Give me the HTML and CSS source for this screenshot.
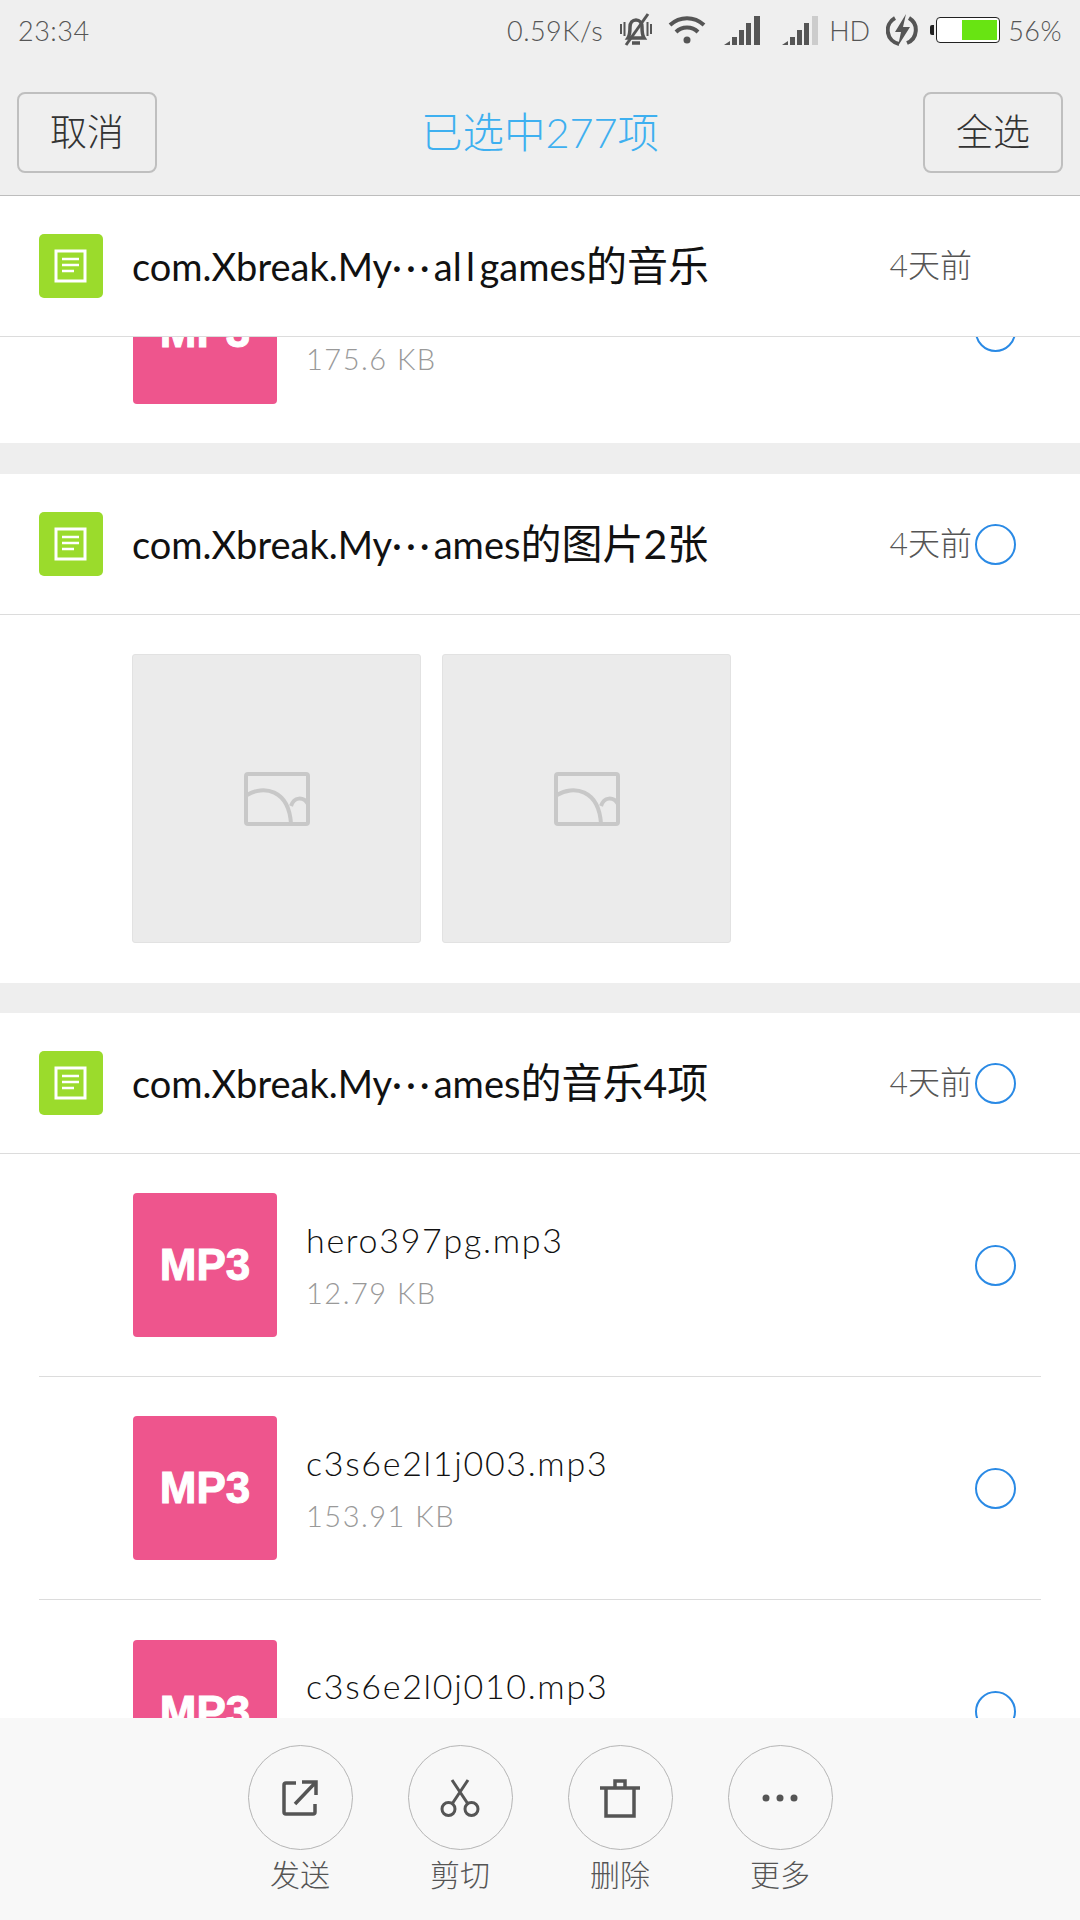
FILE: index.html
```html
<!DOCTYPE html>
<html lang="zh-CN">
<head>
    <meta charset="UTF-8">
    <meta name="viewport" content="width=device-width, initial-scale=1.0">
    <title>已选中277项</title>
    <link rel="stylesheet" href="styles.css">
</head>
<body>
    <div class="top">
        <!-- status bar -->
        <div class="status">
            <span class="clock">23:34</span>
            <span class="speed">0.59K/s</span>
            <svg class="st-mute" width="36" height="36" viewBox="0 0 36 36" fill="none" stroke="#555">
                <path d="M10 26c2-3 2-7 2-11 0-4 2.500-7 6-7s6 3 6 7c0 4 0 8 2 11z" stroke-width="3.500"/>
                <path d="M14 31h8" stroke-width="3.500"/>
                <path d="M3 12v10M6.500 10v14M33 12v10M29.500 10v14" stroke-width="2"/>
                <path d="M30 2L8 33" stroke-width="3"/>
            </svg>
            <svg class="st-wifi" width="38" height="30" viewBox="0 0 38 30" fill="none" stroke="#555" stroke-width="4">
                <path d="M2 10c10-9 24-9 34 0"/>
                <path d="M8 17c6-6 16-6 22 0"/>
                <circle cx="19" cy="25" r="3.500" fill="#555" stroke="none"/>
            </svg>
            <svg class="st-sig" width="38" height="30" viewBox="0 0 38 30" fill="#555">
                <path d="M0 30l6-4v4zM8 22h5v8H8zM15 15h5v15h-5zM22 8h5v22h-5zM30 1h6v29h-6z"/>
            </svg>
            <svg class="st-sig2" width="38" height="30" viewBox="0 0 38 30" fill="#555">
                <path d="M0 30l6-4v4zM8 22h5v8H8zM15 15h5v15h-5zM22 8h5v22h-5z"/>
                <path d="M30 1h6v29h-6z" fill="#ccc"/>
            </svg>
            <span class="hd">HD</span>
            <svg class="st-bolt" width="32" height="34" viewBox="0 0 32 34" fill="none">
                <path d="M9 5a14 14 0 0 0 4 26M23 5a14 14 0 0 1-2 25" stroke="#555" stroke-width="4"/>
                <path d="M20 1L9 19h6l-3 14 12-19h-7z" fill="#555"/>
            </svg>
            <span class="batt-nub"></span>
            <span class="batt"><span class="batt-fill"></span></span>
            <span class="pct">56%</span>
        </div>
        <div class="actionbar">
            <button class="act-btn">取消</button>
            <div class="act-title">已选中277项</div>
            <button class="act-btn">全选</button>
        </div>
    </div>

    <div class="list">
        <div class="group">
            <div class="group-head">
                <svg class="doc" width="64" height="64" viewBox="0 0 64 64">
                    <rect width="64" height="64" rx="5" fill="#9bdb2c"/>
                    <path d="M17 17h29v30H17z" fill="none" stroke="#fff" stroke-width="3"/>
                    <path d="M23 25h17M23 31h17M23 37h12" stroke="#fff" stroke-width="2.500"/>
                </svg>
                <span class="group-name">com.Xbreak.My<span class="dots">···</span>a<span class="wide">ll</span>games<span class="zh">的音乐</span></span>
                <span class="group-time">4天前</span>
                <span class="radio-slot"></span>
            </div>
            <div class="clip">
                <div class="row">
                    <div class="thumb">MP3</div>
                    <div class="info">
                        <div class="file-name">&nbsp;</div>
                        <div class="file-size">175.6 KB</div>
                    </div>
                    <span class="radio"></span>
                </div>
            </div>
        </div>

        <div class="group">
            <div class="group-head">
                <svg class="doc" width="64" height="64" viewBox="0 0 64 64">
                    <rect width="64" height="64" rx="5" fill="#9bdb2c"/>
                    <path d="M17 17h29v30H17z" fill="none" stroke="#fff" stroke-width="3"/>
                    <path d="M23 25h17M23 31h17M23 37h12" stroke="#fff" stroke-width="2.500"/>
                </svg>
                <span class="group-name">com.Xbreak.My<span class="dots">···</span>ames<span class="zh">的图片2张</span></span>
                <span class="group-time">4天前</span>
                <span class="radio-slot"><span class="radio"></span></span>
            </div>
            <div class="pics">
                <div class="pic">
                    <svg width="66" height="54" viewBox="0 0 66 54" fill="none" stroke="#c8c8c8" stroke-width="4">
                        <rect x="2" y="2" width="62" height="50" rx="2"/>
                        <path d="M3 23c16-10 42-6 44 29M47 34c3-9 12-10 17-2"/>
                    </svg>
                </div>
                <div class="pic">
                    <svg width="66" height="54" viewBox="0 0 66 54" fill="none" stroke="#c8c8c8" stroke-width="4">
                        <rect x="2" y="2" width="62" height="50" rx="2"/>
                        <path d="M3 23c16-10 42-6 44 29M47 34c3-9 12-10 17-2"/>
                    </svg>
                </div>
            </div>
        </div>

        <div class="group">
            <div class="group-head">
                <svg class="doc" width="64" height="64" viewBox="0 0 64 64">
                    <rect width="64" height="64" rx="5" fill="#9bdb2c"/>
                    <path d="M17 17h29v30H17z" fill="none" stroke="#fff" stroke-width="3"/>
                    <path d="M23 25h17M23 31h17M23 37h12" stroke="#fff" stroke-width="2.500"/>
                </svg>
                <span class="group-name">com.Xbreak.My<span class="dots">···</span>ames<span class="zh">的音乐4项</span></span>
                <span class="group-time">4天前</span>
                <span class="radio-slot"><span class="radio"></span></span>
            </div>
            <div class="row">
                <div class="thumb">MP3</div>
                <div class="info">
                    <div class="file-name">hero397pg.mp3</div>
                    <div class="file-size">12.79 KB</div>
                </div>
                <span class="radio"></span>
            </div>
            <div class="row">
                <div class="thumb">MP3</div>
                <div class="info">
                    <div class="file-name">c3s6e2l1j003.mp3</div>
                    <div class="file-size">153.91 KB</div>
                </div>
                <span class="radio"></span>
            </div>
            <div class="row">
                <div class="thumb">MP3</div>
                <div class="info">
                    <div class="file-name">c3s6e2l0j010.mp3</div>
                    <div class="file-size">&nbsp;</div>
                </div>
                <span class="radio"></span>
            </div>
        </div>
    </div>

    <div class="bottom">
        <div class="tool">
            <div class="tool-circle">
                <svg width="40" height="40" viewBox="0 0 40 40" fill="none" stroke="#555" stroke-width="3.500">
                    <path d="M16 5H6a2 2 0 0 0-2 2v27a2 2 0 0 0 2 2h27a2 2 0 0 0 2-2V26"/>
                    <path d="M22 4h14v13M35 5L15 26"/>
                </svg>
            </div>
            <span class="tool-label">发送</span>
        </div>
        <div class="tool">
            <div class="tool-circle">
                <svg width="40" height="40" viewBox="0 0 40 40" fill="none" stroke="#555" stroke-width="3">
                    <circle cx="8.500" cy="31" r="6.500"/>
                    <circle cx="31.500" cy="31" r="6.500"/>
                    <path d="M12 26L28 2M28 26L12 2"/>
                </svg>
            </div>
            <span class="tool-label">剪切</span>
        </div>
        <div class="tool">
            <div class="tool-circle">
                <svg width="40" height="40" viewBox="0 0 40 40" fill="none" stroke="#555" stroke-width="3.500">
                    <path d="M0 10h40M6 10v28h28V10M15 10V3h10v7"/>
                </svg>
            </div>
            <span class="tool-label">删除</span>
        </div>
        <div class="tool">
            <div class="tool-circle">
                <svg width="40" height="10" viewBox="0 0 40 10" fill="#555">
                    <circle cx="6" cy="5" r="3.500"/>
                    <circle cx="20" cy="5" r="3.500"/>
                    <circle cx="34" cy="5" r="3.500"/>
                </svg>
            </div>
            <span class="tool-label">更多</span>
        </div>
    </div>
</body>
</html>
```

FILE: styles.css
```css
* {
    box-sizing: border-box;
}

body {
    margin: 0;
    height: 1920px;
    display: flex;
    flex-direction: column;
    overflow: hidden;
    background-color: #eeeeee;
    font-family: "Lato", "Noto Sans CJK SC", sans-serif;
}

/* top */
.top {
    height: 196px;
    background-color: #efefef;
    border-bottom: 1px solid #bdbdbd;
    flex-shrink: 0;
}
.status {
    height: 60px;
    display: flex;
    align-items: center;
    padding: 0 18px;
    color: #555;
    font-size: 27px;
    font-weight: 300;
}
.clock {
    margin-right: auto;
    letter-spacing: 0.5px;
}
.speed {
    letter-spacing: 0.5px;
    margin-right: 15px;
}
.st-wifi {
    margin: 0 0 0 14px;
}
.st-sig {
    margin-left: 18px;
}
.st-sig2 {
    margin-left: 20px;
}
.hd {
    margin-left: 9px;
    margin-right: 16px;
}
.batt-nub {
    width: 4px;
    height: 10px;
    background-color: #222;
    margin-left: 12px;
    margin-right: 2px;
    border-radius: 2px 0 0 2px;
}
.batt {
    width: 64px;
    height: 26px;
    border: 1px solid #222;
    border-radius: 4px;
    background-color: #fff;
    padding: 2px;
    display: flex;
    justify-content: flex-end;
}
.batt-fill {
    width: 35px;
    background-color: #68e412;
}
.pct {
    margin-left: 8px;
    letter-spacing: 0.5px;
}
.actionbar {
    height: 135px;
    display: flex;
    align-items: center;
    justify-content: space-between;
    padding: 10px 17px 0;
}
.act-btn {
    width: 140px;
    height: 81px;
    padding: 0 0 6px;
    border: 2px solid #bfbfbf;
    border-radius: 8px;
    background: none;
    color: #333;
    font-family: inherit;
    font-size: 37px;
    font-weight: 300;
}
.act-title {
    color: #3eb0f0;
    font-size: 41.500px;
    font-weight: 300;
    margin-bottom: 6px;
}

/* list */
.list {
    flex: 1;
    min-height: 0;
    overflow: hidden;
}
.group {
    background-color: #fff;
    margin-bottom: 30px;
}
.group:first-child {
    margin-bottom: 31px;
}
.group-head {
    height: 141px;
    display: flex;
    align-items: center;
    padding-left: 39px;
    border-bottom: 1px solid #dcdcdc;
}
.doc {
    margin-right: 29px;
    flex-shrink: 0;
}
.group-name {
    font-size: 38px;
    color: #111;
    margin-bottom: 6px;
    white-space: nowrap;
}
.dots {
    letter-spacing: 4px;
}
.wide {
    letter-spacing: 4.500px;
}
.zh {
    font-size: 41px;
}
.group-time {
    margin-left: auto;
    margin-right: 3px;
    margin-bottom: 6px;
    color: #555;
    font-size: 32px;
    font-weight: 300;
}
.radio-slot {
    width: 41px;
    margin-right: 64px;
    display: flex;
}
.radio {
    width: 41px;
    height: 41px;
    border: 2px solid #2a8ae5;
    border-radius: 50%;
    flex-shrink: 0;
    display: block;
}
.clip {
    height: 106px;
    overflow: hidden;
    display: flex;
    flex-direction: column;
    justify-content: flex-end;
}
.row {
    display: flex;
    align-items: center;
    flex-shrink: 0;
    margin: 0 39px;
    padding: 39px 25px 39px 94px;
    border-bottom: 1px solid #dcdcdc;
    height: 223px;
}
.clip .row,
.row:last-child {
    border-bottom: none;
}
.thumb {
    width: 144px;
    height: 144px;
    border-radius: 4px;
    background-color: #ee558d;
    color: #fff;
    font-family: "Liberation Sans", sans-serif;
    font-size: 44px;
    font-weight: 700;
    -webkit-text-stroke: 1px #fff;
    display: flex;
    align-items: center;
    justify-content: center;
    margin-right: 29px;
}
.info {
    flex: 1;
    padding-bottom: 2px;
}
.file-name {
    font-size: 34px;
    color: #111;
    font-weight: 300;
    margin-bottom: 15px;
    letter-spacing: 1.700px;
}
.file-size {
    font-size: 29px;
    color: #999;
    font-weight: 300;
    letter-spacing: 1.500px;
}
.pics {
    display: flex;
    gap: 21px;
    padding: 39px 0 40px 132px;
}
.pic {
    width: 289px;
    height: 289px;
    background-color: #ebebeb;
    border: 1px solid #e2e2e2;
    border-radius: 3px;
    display: flex;
    align-items: center;
    justify-content: center;
}

/* bottom */
.bottom {
    height: 202px;
    flex-shrink: 0;
    background-color: #f8f8f8;
    display: flex;
    justify-content: center;
    gap: 55px;
    padding-top: 27px;
}
.tool {
    display: flex;
    flex-direction: column;
    align-items: center;
    width: 105px;
}
.tool-circle {
    width: 105px;
    height: 105px;
    border: 1px solid #b5b5b5;
    border-radius: 50%;
    display: flex;
    align-items: center;
    justify-content: center;
}
.tool-label {
    margin-top: 1px;
    color: #555;
    font-size: 30px;
    font-weight: 300;
}
```
